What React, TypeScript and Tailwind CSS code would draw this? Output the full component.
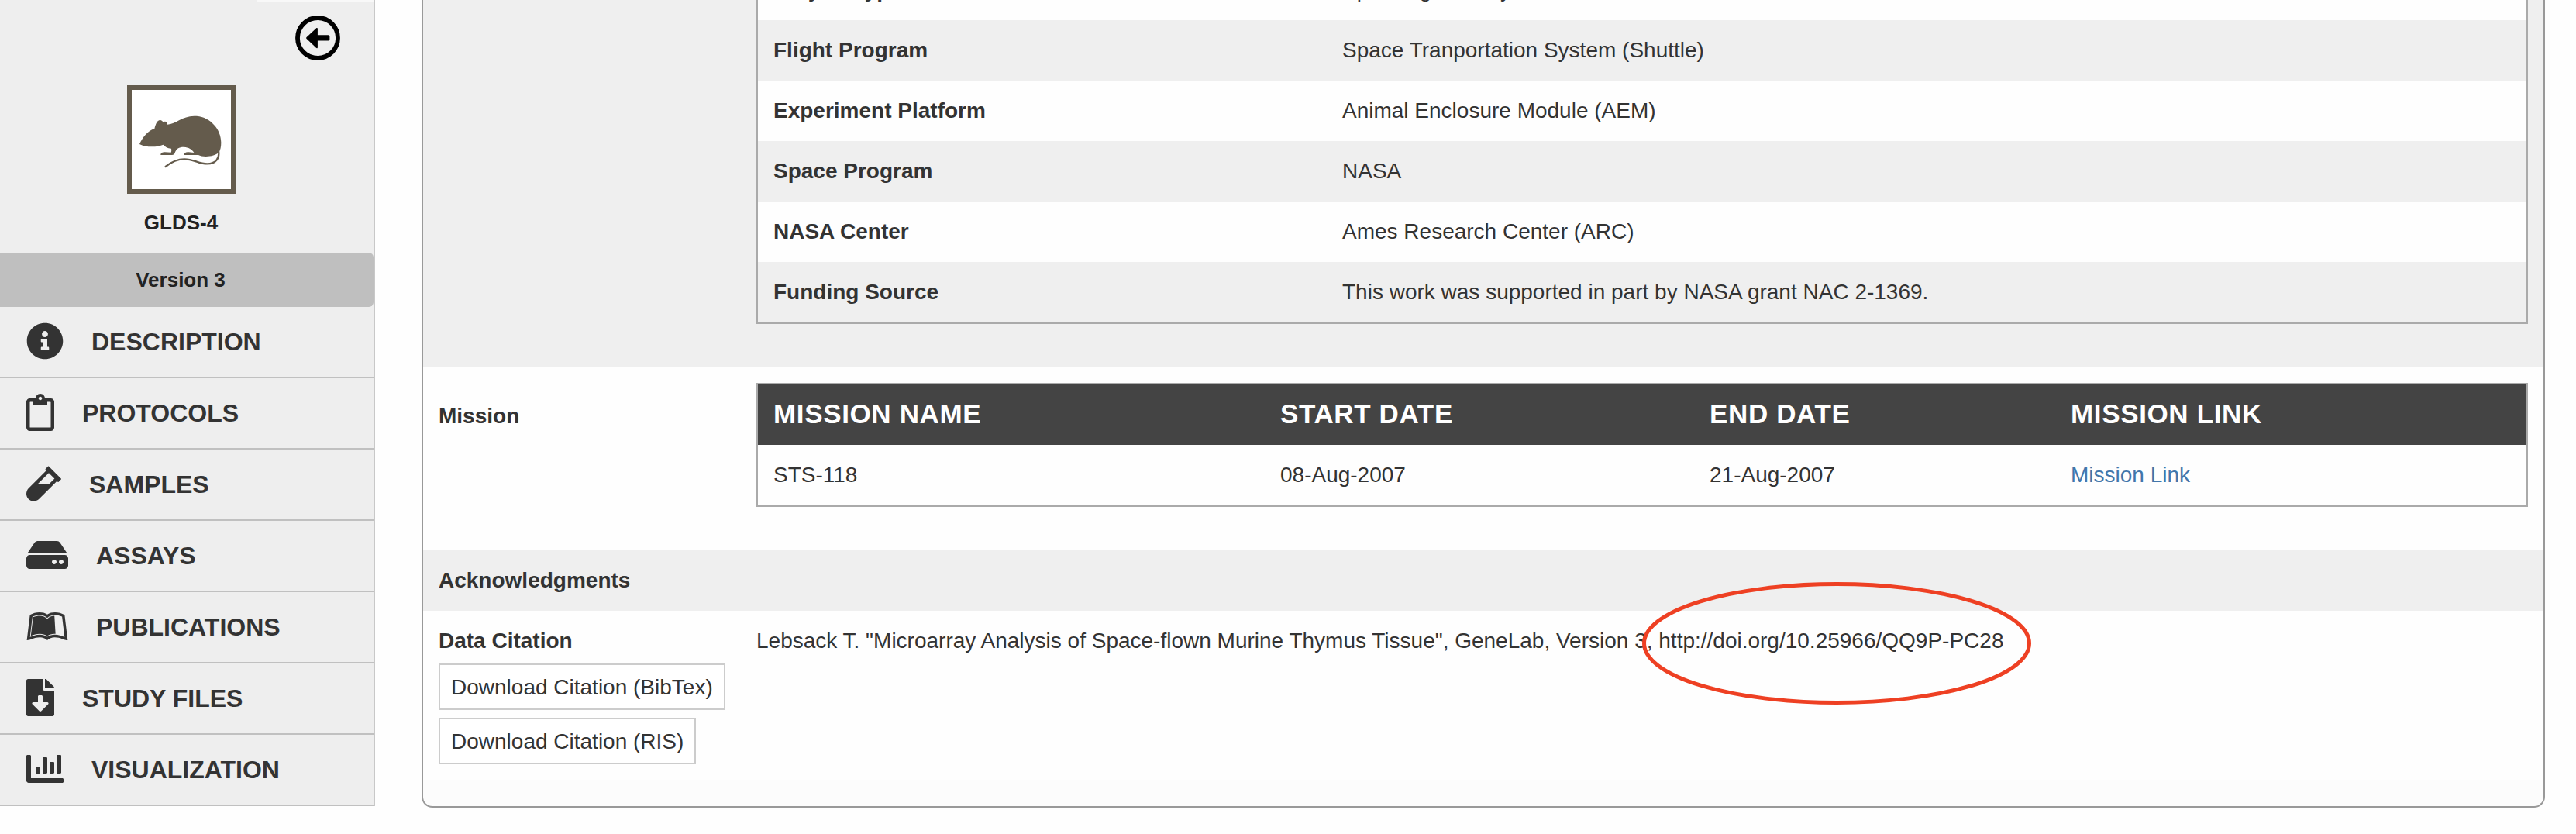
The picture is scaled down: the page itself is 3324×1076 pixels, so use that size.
import type { ReactNode } from 'react';
import type { IconType } from 'react-icons';
import {
  FaChartBar,
  FaFileDownload,
  FaHdd,
  FaInfoCircle,
  FaLeanpub,
  FaRegClipboard,
  FaVial,
} from 'react-icons/fa';

type NavEntry = {
  label: string;
  icon: IconType;
  iconClassName: string;
};

const NAV: NavEntry[] = [
  { label: 'DESCRIPTION', icon: FaInfoCircle, iconClassName: 'w-[48px]' },
  { label: 'PROTOCOLS', icon: FaRegClipboard, iconClassName: 'w-[36px]' },
  { label: 'SAMPLES', icon: FaVial, iconClassName: 'w-[45px]' },
  { label: 'ASSAYS', icon: FaHdd, iconClassName: 'w-[54px]' },
  { label: 'PUBLICATIONS', icon: FaLeanpub, iconClassName: 'w-[54px]' },
  { label: 'STUDY FILES', icon: FaFileDownload, iconClassName: 'w-[36px]' },
  { label: 'VISUALIZATION', icon: FaChartBar, iconClassName: 'w-[48px]' },
];

const PROJECT_ROWS = [
  ['Project Type', 'Spaceflight Study'],
  ['Flight Program', 'Space Tranportation System (Shuttle)'],
  ['Experiment Platform', 'Animal Enclosure Module (AEM)'],
  ['Space Program', 'NASA'],
  ['NASA Center', 'Ames Research Center (ARC)'],
  ['Funding Source', 'This work was supported in part by NASA grant NAC 2-1369.'],
];

function BackIcon() {
  return (
    <svg viewBox="0 0 58 58" className="size-[58px]">
      <circle cx="29" cy="29" r="26" fill="none" stroke="#000" strokeWidth="5.8" />
      <path
        d="M14.6 28.1 27 16.4c.9-.8 1.9-.4 1.9.8v8.1h13.6c1.2 0 1.9.7 1.9 1.8v3.7c0 1.1-.7 1.8-1.9 1.8H28.9V41c0 1.2-1 1.6-1.9.8L14.6 30.1c-.6-.6-.6-1.4 0-2Z"
        fill="#000"
      />
    </svg>
  );
}

function MouseIcon() {
  return (
    <svg viewBox="42 30 420 420" className="size-[140px]">
      <rect x="51" y="39" width="402" height="402" fill="#fff" stroke="#645b4c" strokeWidth="18" />
      <path
        d="M90 258C102 233 122 205 148 199C152 182 158 165 170 165C176 165 179 170 182 172C190 168 198 171 198 182C232 180 254 149 302 149C360 149 406 198 406 252C406 268 403 281 398 289C388 301 366 306 347 306C335 306 325 303 318 300H262C262 292 270 288 280 289L301 291C294 278 280 270 262 269C242 269 232 276 227 292C225 298 222 300 216 300H172C172 292 179 289 188 289L212 290C214 286 214 281 213 275C198 274 190 268 182 260C160 270 116 272 90 258Z"
        fill="#645b4c"
      />
      <path
        d="M396 284C401 312 386 334 352 334C318 334 300 316 264 316C234 316 212 328 191 345"
        fill="none"
        stroke="#645b4c"
        strokeWidth="7"
        strokeLinecap="round"
      />
    </svg>
  );
}

function Sidebar() {
  return (
    <aside className="flex h-[1040px] w-[484px] shrink-0 flex-col border-r-2 border-[#c8c8c8] bg-[#eee]">
      <div className="flex h-[326px] flex-col">
        <div className="h-[2px] w-[150px] self-end bg-[#f8f8f8]" />
        <button className="mt-[18px] mr-[43px] self-end">
          <BackIcon />
        </button>
        <div className="mt-[32px] ml-[164px]">
          <MouseIcon />
        </div>
        <p className="mt-[18px] w-[467px] text-center text-[26px] leading-[38px] font-bold text-[#222]">GLDS-4</p>
      </div>
      <div className="h-[70px] rounded-r-[6px] bg-[#bfbfbf] pt-[16px]">
        <p className="w-[466px] text-center text-[26px] leading-[38px] font-bold text-[#222]">Version 3</p>
      </div>
      <nav>
        {NAV.map(({ label, icon: Icon, iconClassName }) => (
          <a
            key={label}
            className="flex h-[92px] items-center gap-x-[36px] border-b-2 border-[#c0c0c0] pl-[34px] text-[32px] font-bold text-[#333]"
          >
            <Icon className={`mb-[2px] h-[48px] shrink-0 ${iconClassName}`} />
            <span className="leading-[46px]">{label}</span>
          </a>
        ))}
      </nav>
    </aside>
  );
}

function DownloadButton({ children }: { children: ReactNode }) {
  return (
    <button className="mt-[10px] h-[60px] border-2 border-[#ccc] bg-white px-[14px] pt-[2px] leading-[40px]">
      {children}
    </button>
  );
}

export default function App() {
  return (
    <div className="flex h-[1076px] w-[3324px] overflow-hidden bg-[#fefefe] font-['Liberation_Sans',Arial,sans-serif] text-[28px] leading-[40px] text-[#333]">
      <Sidebar />

      <main className="ml-[60px] h-[1042px] w-[2740px] rounded-b-[14px] border-2 border-t-0 border-[#999] bg-[#fcfcfc]">
        <section className="h-[474px] overflow-hidden bg-[#efefef] pl-[430px]">
          <div className="-mt-[52px] w-[2286px] border-2 border-t-0 border-[#aaa]">
            {PROJECT_ROWS.map(([label, value]) => (
              <div
                key={label}
                className="flex h-[78px] pt-[19px] pl-[20px] odd:bg-[#fefefe] even:bg-[#efefef]"
              >
                <div className="w-[734px] font-bold">{label}</div>
                <div>{value}</div>
              </div>
            ))}
          </div>
        </section>

        <section className="flex h-[236px] bg-[#fefefe] pt-[20px] pl-[20px]">
          <div className="w-[410px] pt-[23px] font-bold">Mission</div>
          <div className="h-[160px] w-[2286px] border-2 border-[#aaa]">
            <div className="grid h-[78px] grid-cols-[654px_554px_466px_auto] bg-[#444] pt-[14px] pl-[20px] text-[35px] leading-[48px] font-bold tracking-[0.64px] text-white">
              <span>MISSION NAME</span>
              <span>START DATE</span>
              <span>END DATE</span>
              <span>MISSION LINK</span>
            </div>
            <div className="grid h-[78px] grid-cols-[654px_554px_466px_auto] pt-[19px] pl-[20px]">
              <span>STS-118</span>
              <span>08-Aug-2007</span>
              <span>21-Aug-2007</span>
              <a className="text-[#4276ab]">Mission Link</a>
            </div>
          </div>
        </section>

        <section className="h-[78px] bg-[#efefef] pt-[19px] pl-[20px] font-bold">Acknowledgments</section>

        <section className="flex h-[218px] bg-[#fefefe] pt-[19px] pl-[20px]">
          <div className="flex w-[410px] flex-col items-start">
            <div className="-mb-px font-bold">Data Citation</div>
            <DownloadButton>Download Citation (BibTex)</DownloadButton>
            <DownloadButton>Download Citation (RIS)</DownloadButton>
          </div>
          <p className="whitespace-nowrap">
            Lebsack T. "Microarray Analysis of Space-flown Murine Thymus Tissue", GeneLab, Version 3,{' '}
            <span className="relative">
              http://doi.org/10.25966/QQ9P-PC28
              {/* hand-drawn marker around the DOI */}
              <svg
                viewBox="0 0 502 158"
                className="pointer-events-none absolute -top-[60px] -left-[21px] h-[158px] w-[502px] max-w-none"
              >
                <ellipse cx="251" cy="79" rx="248.5" ry="76.5" fill="none" stroke="#ee4023" strokeWidth="5" />
              </svg>
            </span>
          </p>
        </section>
      </main>
    </div>
  );
}
